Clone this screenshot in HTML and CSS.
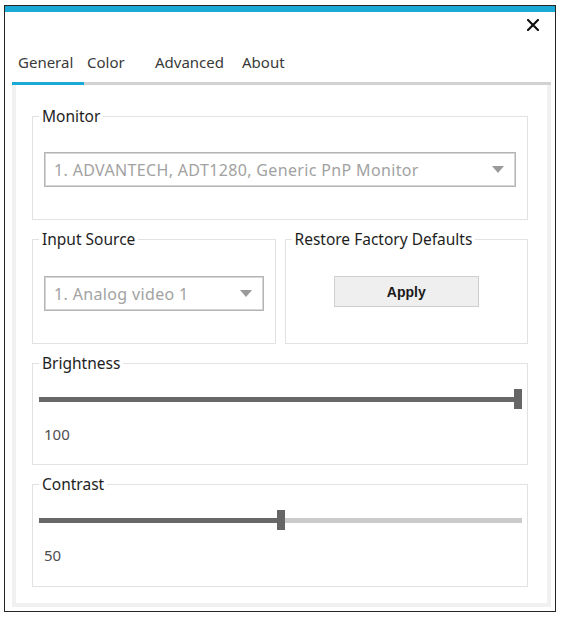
FILE: index.html
```html
<!DOCTYPE html>
<html lang="en">
<head>
<meta charset="utf-8">
<title>Monitor Settings</title>
<link rel="stylesheet" href="styles.css">
</head>
<body>
<div class="window">
  <div class="accent"></div>
  <div class="titlebar">
    <button class="close" aria-label="Close">
      <svg width="12" height="12" viewBox="0 0 12 12"><path d="M1 1 L11 11 M11 1 L1 11" stroke="#111" stroke-width="2.2" stroke-linecap="square" fill="none"/></svg>
    </button>
  </div>
  <div class="tabs">
    <div class="tab tab-general active">General</div>
    <div class="tab tab-color">Color</div>
    <div class="tab tab-advanced">Advanced</div>
    <div class="tab tab-about">About</div>
  </div>
  <div class="panel">
    <fieldset class="group">
      <legend>Monitor</legend>
      <div class="select select-monitor">
        <span class="select-text">1. ADVANTECH, ADT1280, Generic PnP Monitor</span>
        <span class="arrow"></span>
      </div>
    </fieldset>
    <div class="row">
      <fieldset class="group">
        <legend>Input Source</legend>
        <div class="select">
          <span class="select-text">1. Analog video 1</span>
          <span class="arrow"></span>
        </div>
      </fieldset>
      <fieldset class="group group-center">
        <legend>Restore Factory Defaults</legend>
        <button class="apply">Apply</button>
      </fieldset>
    </div>
    <fieldset class="group group-slider">
      <legend>Brightness</legend>
      <div class="slider" style="--v: 1">
        <div class="track-fill"></div>
        <div class="thumb"></div>
        <div class="track-rest"></div>
      </div>
      <div class="value">100</div>
    </fieldset>
    <fieldset class="group group-slider group-last">
      <legend>Contrast</legend>
      <div class="slider" style="--v: 0.5">
        <div class="track-fill"></div>
        <div class="thumb"></div>
        <div class="track-rest"></div>
      </div>
      <div class="value">50</div>
    </fieldset>
  </div>
</div>
</body>
</html>
```
FILE: styles.css
```css
* { box-sizing: border-box; }

html, body {
  margin: 0;
  padding: 0;
  background: #ffffff;
}

body {
  font-family: "Noto Sans", "Open Sans", sans-serif;
  font-size: 15px;
  color: #1e1e1e;
}

.window {
  margin: 5px 0 0 4px;
  width: 552px;
  height: 607px;
  border: 1px solid #262626;
  background: #ffffff;
  display: flex;
  flex-direction: column;
}

.accent {
  height: 6px;
  background: #1ba9d6;
  flex: none;
}

.titlebar {
  height: 26px;
  display: flex;
  justify-content: flex-end;
  align-items: flex-start;
  padding: 7px 16px 0 0;
  flex: none;
}

.close {
  width: 12px;
  height: 12px;
  padding: 0;
  margin: 0;
  border: 0;
  background: none;
  display: block;
}

.close svg { display: block; }

.tabs {
  display: flex;
  margin: 0 4px 0 7px;
  padding-top: 14px;
  border-bottom: 3px solid #d2d2d2;
  flex: none;
}

.tab {
  line-height: 20px;
  height: 30px;
  color: #3a3a3a;
  font-size: 15px;
}

.tab.active {
  border-bottom: 3px solid #1ba9d6;
  margin-bottom: -3px;
  height: 33px;
}

.tab-general { width: 72px; padding-left: 6px; }
.tab-color { width: 68px; padding-left: 3px; }
.tab-advanced { width: 87px; padding-left: 3px; }
.tab-about { padding-left: 3px; }

.panel {
  margin: 0 4px 0 7px;
  border: 4px solid #f1f1f1;
  border-top: 0;
  padding: 21px 19px 16px 16px;
  display: flex;
  flex-direction: column;
  gap: 9px;
}

.row {
  display: grid;
  grid-template-columns: 1fr 1fr;
  gap: 9px;
}

.group {
  margin: 0;
  min-width: 0;
  border: 1px solid #e2e2e2;
  padding: 0 0 32px 0;
}

.group legend {
  margin-left: 6px;
  padding: 0 3px;
  line-height: 20px;
  font-size: 15.5px;
  color: #1e1e1e;
}

.group-center {
  display: flex;
  flex-direction: column;
  align-items: center;
}

.select {
  margin: 26px 11px 0 11px;
  height: 35px;
  border: 1px solid #b4b4b4;
  box-shadow: inset 0 0 0 1px #d6d6d6;
  display: flex;
  align-items: center;
  justify-content: space-between;
  padding: 0 11px 0 9px;
}

.row .select { margin-top: 27px; }

.select-text {
  color: #a2a2a2;
  font-size: 16px;
  letter-spacing: 0.35px;
  line-height: 20px;
  white-space: nowrap;
}

.arrow {
  width: 0;
  height: 0;
  border-left: 6.5px solid transparent;
  border-right: 6.5px solid transparent;
  border-top: 7px solid #9a9a9a;
}

.apply {
  margin-top: 27px;
  width: 145px;
  height: 31px;
  background: #efefef;
  border: 1px solid #cfcfcf;
  font-family: "Liberation Sans", Arial, sans-serif;
  font-weight: bold;
  font-size: 14px;
  color: #1a1a1a;
  padding: 0;
}

.slider {
  margin: 16px 5px 0 6px;
  height: 20px;
  display: flex;
  align-items: center;
}

.track-fill {
  width: calc((100% - 8px) * var(--v));
  height: 5px;
  background: #686868;
  flex: none;
}

.thumb {
  width: 8px;
  height: 20px;
  background: #666666;
  flex: none;
}

.track-rest {
  flex: 1;
  height: 5px;
  background: #cbcbcb;
}

.value {
  margin: 15px 0 0 11px;
  line-height: 20px;
  color: #4e4e4e;
}

.group-slider { padding-bottom: 20px; }
.group-last { padding-bottom: 21px; }
```
